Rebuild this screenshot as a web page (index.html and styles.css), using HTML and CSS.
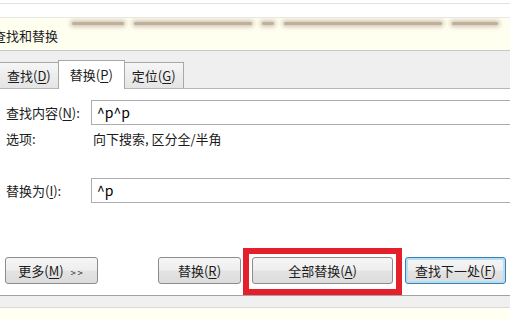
FILE: index.html
```html
<!DOCTYPE html>
<html lang="zh-CN">
<head>
  <meta charset="UTF-8" />
  <title>查找和替换</title>
  <link rel="stylesheet" href="styles.css">
</head>
<body>
  <div class="browser-top"></div>

  <div class="note-bar">
    <div class="blur-row">
      <span class="b1"></span>
      <span class="b2"></span>
      <span class="b3"></span>
      <span class="b4"></span>
      <span class="b5"></span>
    </div>
    <div class="dlg-title">查找和替换</div>
  </div>

  <div class="tabs">
    <div class="tab">查找(<u>D</u>)</div>
    <div class="tab active">替换(<u>P</u>)</div>
    <div class="tab">定位(<u>G</u>)</div>
  </div>

  <div class="panel">
    <div class="row">
      <label>查找内容(<u>N</u>):</label>
      <div class="field">^p^p</div>
    </div>
    <div class="row opt">
      <span>选项:</span>
      <span class="opt-value">向下搜索, 区分全/半角</span>
    </div>
    <div class="row replace-row">
      <label>替换为(<u>I</u>):</label>
      <div class="field">^p</div>
    </div>

    <div class="buttons">
      <button class="btn more">更多(<u>M</u>) <span class="arrows">&gt;&gt;</span></button>
      <button class="btn replace-one">替换(<u>R</u>)</button>
      <button class="btn replace-all">全部替换(<u>A</u>)</button>
      <button class="btn find-next">查找下一处(<u>F</u>)</button>
    </div>
  </div>

  <div class="status"></div>
  <div class="page-bottom"></div>
</body>
</html>
```

FILE: styles.css
```css
body {
  margin: 0;
  font-family: "Noto Sans CJK SC", "Noto Sans", sans-serif;
  font-size: 13px;
  color: #1b1b1b;
  background: #fff;
  width: 510px;
  height: 320px;
  overflow: hidden;
}
u {
  text-decoration-thickness: 1px;
  text-underline-offset: 2px;
}
.browser-top {
  margin-top: 3px;
  height: 13px;
  border-top: 1px solid #e2e2e2;
  border-bottom: 1px solid #e7e7e7;
}
.note-bar {
  height: 32px;
  background: #fffff0;
  border-bottom: 1px solid #c8c8c8;
  overflow: hidden;
}
.blur-row {
  display: flex;
  align-items: center;
  height: 9px;
  padding-top: 1px;
  padding-left: 72px;
  gap: 10px;
}
.blur-row span {
  height: 3px;
  border-radius: 2px;
  background: rgba(110, 80, 60, 0.45);
  box-shadow: 0 0 4px 2px rgba(130, 95, 70, 0.35);
}
.b1 { width: 52px; }
.b2 { width: 118px; }
.b3 { width: 12px; }
.b4 { width: 158px; }
.b5 { width: 46px; }
.dlg-title {
  margin-left: -7px;
  line-height: 16px;
}
.tabs {
  display: flex;
  align-items: flex-end;
  height: 37px;
  background: #efefef;
  border-bottom: 1px solid #b7b7b7;
}
.tab {
  height: 25px;
  line-height: 25px;
  padding: 0 7px;
  margin-left: -1px;
  border: 1px solid #a8a8a8;
  border-bottom: none;
  background: linear-gradient(#f6f6f6, #e4e4e4);
}
.tab.active {
  height: 28px;
  line-height: 27px;
  padding: 0 11px;
  margin-bottom: -1px;
  background: #fff;
  position: relative;
  z-index: 1;
}
.panel {
  padding: 11px 0;
  border-bottom: 1px solid #a3a3a3;
}
.row {
  display: grid;
  grid-template-columns: 91px 1fr;
  align-items: center;
  height: 25px;
}
.row label,
.row > span:first-child {
  padding-left: 6px;
}
.field {
  height: 23px;
  line-height: 23px;
  border: 1px solid #abadb3;
  border-right: none;
  padding-left: 5px;
  font-size: 14px;
  color: #000;
}
.opt {
  height: 16px;
  line-height: 16px;
  margin-top: 6px;
}
.opt-value {
  padding-left: 2px;
}
.replace-row {
  margin-top: 31px;
}
.buttons {
  display: flex;
  margin-top: 54px;
  padding: 0 4px 0 5px;
}
.btn {
  box-sizing: border-box;
  height: 27px;
  padding: 0;
  font-family: inherit;
  font-size: 13px;
  color: #1b1b1b;
  border: 1px solid #8c8c8c;
  border-radius: 3px;
  background: linear-gradient(#f6f6f6, #eeeeee 48%, #e3e3e3 52%, #dcdcdc);
}
.more {
  width: 93px;
}
.arrows {
  font-size: 9px;
  letter-spacing: 2px;
  margin-left: 4px;
}
.replace-one {
  width: 83px;
  margin-left: auto;
}
.replace-all {
  width: 141px;
  margin-left: 11px;
  position: relative;
}
.replace-all::after {
  content: "";
  position: absolute;
  top: -10px;
  left: -10px;
  right: -10px;
  bottom: -12px;
  border: 6px solid #e3202b;
}
.find-next {
  width: 101px;
  margin-left: 12px;
  border-color: #3c7fb1;
  box-shadow: inset 0 0 0 2px #b4e0f7;
}
.status {
  height: 11px;
  background: #f0f0f0;
  border-bottom: 1px solid #dadada;
}
.page-bottom {
  height: 14px;
  background: #fffff2;
}
```
